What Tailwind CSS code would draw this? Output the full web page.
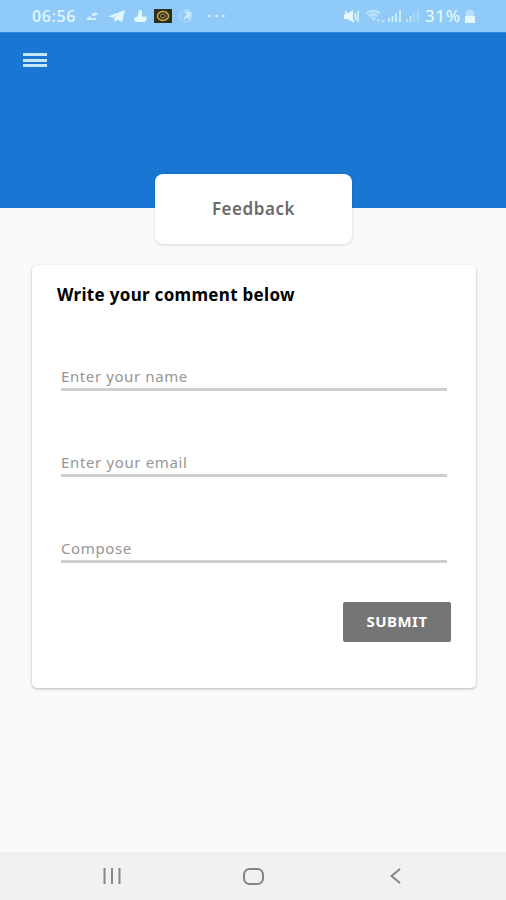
<!DOCTYPE html>
<html lang="en">
<head>
<meta charset="utf-8">
<title>Feedback</title>
<script src="https://cdn.jsdelivr.net/npm/@tailwindcss/browser@4"></script>
</head>
<body class="w-[506px] h-[900px] overflow-hidden bg-[#fafafa] font-['Noto_Sans',sans-serif] flex flex-col">
  <div class="h-8 shrink-0 bg-[#90caf9] flex items-center justify-between pl-[32px] pr-[31px] text-[#e4f8fb]">
    <div class="flex items-center">
      <span class="w-[46px] text-[16px] leading-8 font-medium whitespace-nowrap tracking-[0.6px]">06:56</span>
      <svg class="ml-[9px] opacity-80" width="12" height="10" viewBox="0 0 12 10" fill="currentColor"><path d="M5 2h2l1-1 1 1h2v2H9L7 5H5zM1 6l3-1v2h5v2H0V7z"/></svg>
      <svg class="ml-[9px]" width="17" height="13" viewBox="0 0 17 13" fill="currentColor"><path d="M0 6.500 17 0l-3 12-4.500-2.500L7 12 6 8l7-5-8 4.500z"/><path d="m6 8 7-5-4 6z" opacity=".6"/></svg>
      <svg class="ml-[9px]" width="13" height="13" viewBox="0 0 13 13" fill="currentColor"><path d="M5 0h2l1 2v4l2 1 2-1 1 3-2 3H2l-2-2V8l3-1 1-2z"/></svg>
      <svg class="ml-[7px]" width="18" height="14" viewBox="0 0 18 14"><path fill="#302d22" d="M0 0h18v14H0z"/><ellipse cx="9" cy="7" rx="5.500" ry="4.500" fill="none" stroke="#c4a53c" stroke-width="1.600"/><ellipse cx="9" cy="7" rx="2.500" ry="2" fill="none" stroke="#b09a45"/></svg>
      <svg class="ml-[7px] opacity-70" width="14" height="14" viewBox="0 0 14 14" fill="none" stroke="currentColor"><circle cx="7" cy="7" r="6" opacity=".7"/><path d="m6 3 5 1-1 5-2-2-3 3M8 4l2 3" stroke-width="2"/></svg>
      <svg class="ml-[15px]" width="17" height="4" viewBox="0 0 17 4" fill="currentColor"><circle cx="1.500" cy="2" r="1.200"/><circle cx="8.500" cy="2" r="1.200"/><circle cx="15.500" cy="2" r="1.200"/></svg>
    </div>
    <div class="flex items-center">
      <svg width="15" height="13" viewBox="0 0 15 13" fill="currentColor"><path d="M0 4h3l6-4v12L3 9H0z"/><path d="m1 1 9 11M11 3l1 7M14 1v11" fill="none" stroke="currentColor" stroke-width="1.500"/></svg>
      <svg class="ml-[7px] opacity-60" width="19" height="13" viewBox="0 0 19 13" fill="currentColor"><path d="M0 3q7-5 14 0l-2 2-2 3-3 3-3-4z" opacity=".45"/><path d="M0 3q7-5 14 0M3 6q4-3 8 0M6 9h3" fill="none" stroke="currentColor" stroke-width="1.300"/><path d="M11 9h3l-1.500 4zM15 10h4l-2 3z"/></svg>
      <svg class="ml-[3px] opacity-70" width="13" height="12" viewBox="0 0 13 12" fill="currentColor"><path d="M0 8h2v4H0zM3.500 6h2v6h-2zM7 3h2v9H7zM11 0h2v12h-2z"/></svg>
      <svg class="ml-[5px] opacity-60" width="13" height="12" viewBox="0 0 13 12" fill="currentColor"><path d="M0 9h2v3H0zM3.500 6h2v6h-2zM7.500 3h1v9h-1zM11.500 0h1v12h-1z"/></svg>
      <span class="ml-[6px] w-[38px] text-[17px] leading-8 font-medium whitespace-nowrap tracking-[0.6px]">31%</span>
      <svg class="ml-[2px]" width="10" height="13" viewBox="0 0 10 13" fill="currentColor"><path d="M3 0h4v1h2v5H1V1h2z" opacity=".5"/><path d="M0 6h10v7H0z"/></svg>
    </div>
  </div>

  <header class="h-44 shrink-0 bg-[#1976d2] pl-[23px] pt-[21px] shadow-[inset_0_1px_0_#3287dc]">
    <div class="w-6 flex flex-col gap-[2.500px]">
      <div class="h-[3px] bg-[#c5e7fb]"></div>
      <div class="h-[3px] bg-[#c5e7fb]"></div>
      <div class="h-[3px] bg-[#c5e7fb]"></div>
    </div>
  </header>

  <h1 class="relative -mt-[34.500px] ml-[155px] w-[197px] h-[70px] shrink-0 rounded-[8px] bg-white shadow-[0_1px_3px_rgba(0,0,0,0.15)] flex items-center justify-center text-[17px] font-semibold text-[#6b6b6b] tracking-[0.55px]"><span>Feedback</span></h1>

  <main class="mt-[21px] ml-8 w-[444px] h-[423px] shrink-0 rounded-[5px] bg-white shadow-[0_1px_3px_rgba(0,0,0,0.28)] flex flex-col">
    <h2 class="ml-[25px] mt-[18px] h-6 leading-6 text-[17px] font-bold text-black whitespace-nowrap tracking-[0.3px]"><span>Write your comment below</span></h2>
    <div class="ml-[29px] w-[386px] mt-[58px] h-[26px] border-b-[3px] border-[#cfcfcf] text-[15px] leading-[23px] text-[#969696] tracking-[0.6px]"><span>Enter your name</span></div>
    <div class="ml-[29px] w-[386px] mt-[60px] h-[26px] border-b-[3px] border-[#cfcfcf] text-[15px] leading-[23px] text-[#969696] tracking-[0.64px]"><span>Enter your email</span></div>
    <div class="ml-[29px] w-[386px] mt-[60px] h-[26px] border-b-[3px] border-[#cfcfcf] text-[15px] leading-[23px] text-[#969696] tracking-[0.6px]"><span>Compose</span></div>
    <button class="self-end mr-[25px] mt-[39px] w-[108px] h-10 rounded-[2px] bg-[#757575] text-white text-[15px] font-bold tracking-[0.5px]"><span>SUBMIT</span></button>
  </main>

  <nav class="mt-auto h-12 shrink-0 bg-[#f1f1f1] flex items-center pl-[103px] text-[#858585]">
    <svg width="18" height="16" viewBox="0 0 18 16" fill="none" stroke="currentColor" stroke-width="2"><path d="M1.500 0v16M9 0v16M16.500 0v16"/></svg>
    <svg class="ml-[122px]" width="21" height="17" viewBox="0 0 21 17" fill="none" stroke="currentColor" stroke-width="2"><rect x="1" y="1" width="19" height="15" rx="5.500"/></svg>
    <svg class="ml-[126px]" width="11" height="16" viewBox="0 0 11 16" fill="none" stroke="currentColor" stroke-width="2"><path d="M10 1 1.500 8l8.500 7"/></svg>
  </nav>
</body>
</html>
